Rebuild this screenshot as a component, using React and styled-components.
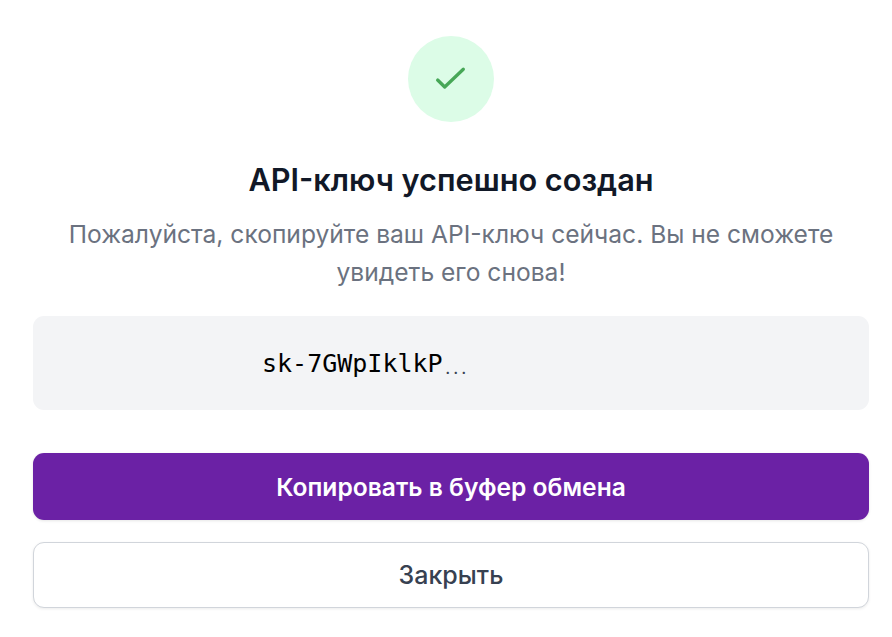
import styled, { createGlobalStyle } from "styled-components";

const GlobalStyle = createGlobalStyle`
  html, body {
    margin: 0;
    padding: 0;
    background: #ffffff;
  }
  body {
    font-family: "Inter", "Liberation Sans", sans-serif;
  }
`;

const App = () => {
  return (
    <>
      <GlobalStyle />
      <Dialog>
        <IconCircle>
          <svg width="36" height="36" viewBox="0 0 24 24" fill="none">
            <path
              d="M3.1 12.7L7.8 17.3L20.2 5.5"
              stroke="#47a757"
              strokeWidth="2.2"
              strokeLinecap="round"
              strokeLinejoin="round"
            />
          </svg>
        </IconCircle>
        <Title>API-ключ успешно создан</Title>
        <Subtitle>
          Пожалуйста, скопируйте ваш API-ключ сейчас. Вы не сможете увидеть его
          снова!
        </Subtitle>
        <KeyBox>
          <KeyText>sk-7GWpIklkP</KeyText>
          <KeyDots>…</KeyDots>
        </KeyBox>
        <PrimaryButton>Копировать в буфер обмена</PrimaryButton>
        <SecondaryButton>Закрыть</SecondaryButton>
      </Dialog>
    </>
  );
};

const Dialog = styled.div`
  box-sizing: border-box;
  width: 892px;
  height: 637px;
  padding: 36px 23px 0 33px;
  display: flex;
  flex-direction: column;
  align-items: center;
  overflow: hidden;
`;

const IconCircle = styled.div`
  width: 86px;
  height: 86px;
  border-radius: 50%;
  background: #dcfce7;
  display: flex;
  align-items: center;
  justify-content: center;
  flex-shrink: 0;
`;

const Title = styled.h3`
  margin: 38px 0 0;
  font-size: 30.7px;
  line-height: 40px;
  font-weight: 600;
  color: #111827;
`;

const Subtitle = styled.p`
  margin: 15px 0 0;
  width: 800px;
  font-size: 24.6px;
  line-height: 38px;
  font-weight: 400;
  color: #6b7280;
  text-align: center;
`;

const KeyBox = styled.div`
  box-sizing: border-box;
  margin-top: 25px;
  width: 100%;
  height: 94px;
  padding-left: 229px;
  border-radius: 11px;
  background: #f3f4f6;
  display: flex;
  align-items: center;
`;

const KeyText = styled.span`
  font-family: "DejaVu Sans Mono", "Liberation Mono", monospace;
  font-size: 25px;
  color: #000000;
`;

const KeyDots = styled.span`
  font-family: "Inter", sans-serif;
  font-size: 29px;
  font-weight: 200;
  color: #374151;
  margin-left: 1px;
`;

const PrimaryButton = styled.button`
  margin-top: 43px;
  width: 100%;
  height: 67px;
  border: none;
  border-radius: 11px;
  background: #6b21a5;
  color: #ffffff;
  font-family: "Inter", sans-serif;
  font-size: 24.6px;
  font-weight: 600;
  box-shadow: 0 1px 3px rgba(0, 0, 0, 0.1);
`;

const SecondaryButton = styled.button`
  margin-top: 22px;
  width: 100%;
  height: 66px;
  border: 1px solid #d1d5db;
  border-radius: 11px;
  background: #ffffff;
  color: #374151;
  font-family: "Inter", sans-serif;
  font-size: 25px;
  font-weight: 500;
  box-shadow: 0 1px 3px rgba(0, 0, 0, 0.08);
`;

export default App;
